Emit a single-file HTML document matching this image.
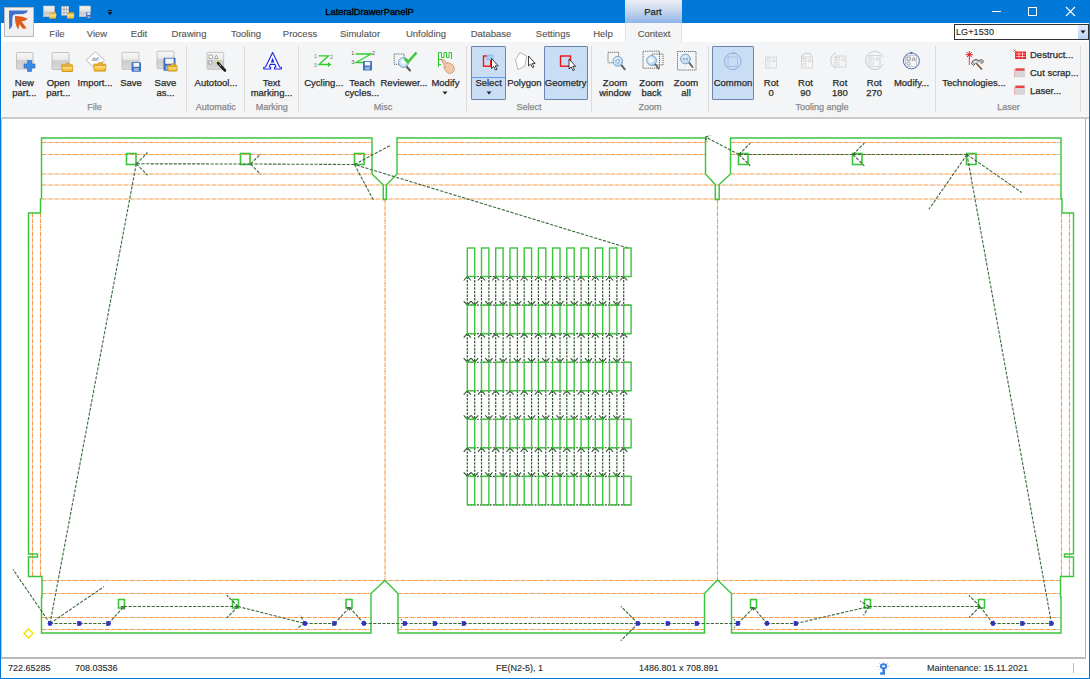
<!DOCTYPE html>
<html><head><meta charset="utf-8">
<style>
*{box-sizing:border-box}
html,body{margin:0;padding:0;width:1090px;height:679px;overflow:hidden;background:#fff;font-family:"Liberation Sans",sans-serif;}
div{-webkit-text-stroke:0.25px currentColor}
.abs{position:absolute}
#title{left:0;top:0;width:1090px;height:23px;background:#0078d7}
#tabs{left:1px;top:23px;width:1088px;height:19px;background:#fff}
#ribbon{left:2px;top:42px;width:1087px;height:77px;background:#f4f5f6;border-bottom:2px solid #cacaca}
.t{position:absolute;font-size:9.5px;color:#2b2b2b;white-space:nowrap;line-height:10.8px;text-align:center;transform:translateX(-50%)}
.g{position:absolute;font-size:9px;color:#8a8a8a;white-space:nowrap;line-height:11px;transform:translateX(-50%);top:101.6px}
.m{position:absolute;font-size:9.5px;color:#555;top:28px;white-space:nowrap;transform:translateX(-50%);-webkit-text-stroke:0.12px #555}
.sep{position:absolute;width:1px;background:#dcdcdc;top:46px;height:66px}
.st{position:absolute;font-size:9px;color:#2a2a2a;top:662.5px;white-space:nowrap;-webkit-text-stroke:0.12px #2a2a2a}
</style></head><body>
<div id="title" class="abs"></div>
<div class="abs" style="left:0;top:23px;width:1px;height:656px;background:#0078d7"></div>
<div class="abs" style="left:1089px;top:23px;width:1px;height:656px;background:#0078d7"></div>
<div class="abs" style="left:0;top:677.5px;width:1090px;height:1.5px;background:#0078d7"></div>
<div id="tabs" class="abs"></div>
<div id="ribbon" class="abs"></div>
<!-- Part tab -->
<div class="abs" style="left:625px;top:0;width:57px;height:23px;background:linear-gradient(#eceef2,#c9d8ee 45%,#8fb5e8)"></div>
<div class="abs" style="left:625px;top:23px;width:57px;height:20px;background:#f4f5f6;border-left:1px solid #e2e2e2;border-right:1px solid #e2e2e2"></div>
<div class="abs" style="left:653px;top:6px;font-size:9.5px;color:#1e1e1e;transform:translateX(-50%)">Part</div>
<div class="abs" style="left:369.5px;top:6.5px;font-size:9.3px;color:#000;transform:translateX(-50%);-webkit-text-stroke:0.35px #000">LateralDrawerPanelP</div>
<!-- app icon -->
<div class="abs" style="left:4px;top:7px;width:30px;height:30px;background:#f0f0f0;border:1px solid #b9b9b9"></div>
<svg class="abs" style="left:4px;top:7px" width="30" height="30" viewBox="0 0 30 30">
<path d="M5,3.6 L24,3.6 Q23,6.6 19,7 L11,7.3 Q8.6,7.8 8.4,10.5 L8.2,18.5 Q7.5,21 5.2,22.6 Z" fill="#3d72c8"/>
<path d="M11,9 Q18.5,8.6 23.8,11.8 Q22,14.2 17.6,14.4 L22.4,21 Q20.6,22.4 18.4,21.2 L15.4,17.2 Q15,20.2 14,22.5 Q10.5,16 11,9 Z" fill="#e05a1c"/>
</svg>
<!-- quick access icons -->
<svg class="abs" style="left:40px;top:3px" width="80" height="18" viewBox="0 0 80 18">
<defs><linearGradient id="gb" x1="0" y1="0" x2="0" y2="1"><stop offset="0" stop-color="#f6f6f6"/><stop offset="0.45" stop-color="#e4e4e4"/><stop offset="0.6" stop-color="#c9c9c9"/><stop offset="1" stop-color="#dadada"/></linearGradient>
<linearGradient id="yf" x1="0" y1="0" x2="0" y2="1"><stop offset="0" stop-color="#ffe68a"/><stop offset="1" stop-color="#f2b52c"/></linearGradient></defs>
<rect x="3.5" y="3" width="11" height="10.7" fill="url(#gb)" stroke="#c4c4c4" stroke-width="0.6"/>
<path d="M9.2,10 h2.4 l0.8,-0.7 h3.6 v6 h-6.8z" fill="#e5ad2a"/><path d="M9.6,11.2 h7 l-0.9,4.3 h-6.3z" fill="url(#yf)"/>
<rect x="21.5" y="3" width="7.5" height="9.5" fill="#d8d8d8"/>
<g fill="#f2f2f2" stroke="#9a9a9a" stroke-width="0.4"><rect x="21.8" y="3.4" width="2" height="2.6"/><rect x="24.3" y="3.4" width="2" height="2.6"/><rect x="26.8" y="3.4" width="2" height="2.6"/><rect x="21.8" y="6.6" width="2" height="2.6"/><rect x="24.3" y="6.6" width="2" height="2.6"/><rect x="26.8" y="6.6" width="2" height="2.6"/><rect x="21.8" y="9.8" width="2" height="2.4"/><rect x="24.3" y="9.8" width="2" height="2.4"/></g>
<path d="M27,10 h2.4 l0.8,-0.7 h3.6 v6 h-6.8z" fill="#e5ad2a"/><path d="M27.4,11.2 h7 l-0.9,4.3 h-6.3z" fill="url(#yf)"/>
<rect x="39.5" y="3" width="11" height="10.7" fill="url(#gb)" stroke="#c4c4c4" stroke-width="0.6"/>
<rect x="46.2" y="9.3" width="5.2" height="6.2" fill="#3d6cc0"/><rect x="47.3" y="9.6" width="3" height="2.2" fill="#eef2fa"/><rect x="47.5" y="13.3" width="2.6" height="1.8" fill="#9ab3dc"/>
<rect x="68" y="7" width="4" height="1" fill="#111"/><path d="M67.6,9 h4.8 l-2.4,3.2z" fill="#111"/>
</svg>
<!-- window controls -->
<div class="abs" style="left:992px;top:11px;width:9px;height:1px;background:#fff"></div>
<div class="abs" style="left:1028px;top:7px;width:9px;height:9px;border:1px solid #fff"></div>
<svg class="abs" style="left:1065px;top:6px" width="11" height="11" viewBox="0 0 11 11"><path d="M1,1 L10,10 M10,1 L1,10" stroke="#fff" stroke-width="1.1"/></svg>
<!-- menu tabs -->
<div class="m" style="left:57px">File</div>
<div class="m" style="left:97px">View</div>
<div class="m" style="left:139px">Edit</div>
<div class="m" style="left:189px">Drawing</div>
<div class="m" style="left:246px">Tooling</div>
<div class="m" style="left:300px">Process</div>
<div class="m" style="left:360px">Simulator</div>
<div class="m" style="left:426px">Unfolding</div>
<div class="m" style="left:491px">Database</div>
<div class="m" style="left:553px">Settings</div>
<div class="m" style="left:603px">Help</div>
<div class="m" style="left:654px">Context</div>
<!-- combo -->
<div class="abs" style="left:954px;top:24px;width:135px;height:16px;background:#fff;border:1px solid #333"></div>
<div class="abs" style="left:956px;top:26.5px;font-size:9px;color:#222;-webkit-text-stroke:0.1px #222;letter-spacing:0.1px">LG+1530</div>
<div class="abs" style="left:1078px;top:25px;width:10px;height:14px;background:linear-gradient(#e3eefa,#b8d2f0)"></div>
<svg class="abs" style="left:1080px;top:30px" width="7" height="5"><path d="M0.5,0.5 h5 l-2.5,3z" fill="#111"/></svg>

<div class="abs" style="left:471px;top:46px;width:35px;height:54px;background:#c9def5;border:1px solid #6a86aa;border-radius:1px"></div><div class="abs" style="left:472px;top:77px;width:33px;height:1px;background:#5b9de6"></div><div class="abs" style="left:544px;top:46px;width:44px;height:54px;background:#c9def5;border:1px solid #6a86aa;border-radius:1px"></div><div class="abs" style="left:712px;top:46px;width:42px;height:54px;background:#c9def5;border:1px solid #6a86aa;border-radius:1px"></div><div class="sep" style="left:186px"></div><div class="sep" style="left:243.5px"></div><div class="sep" style="left:297.5px"></div><div class="sep" style="left:466px"></div><div class="sep" style="left:591px"></div><div class="sep" style="left:707.5px"></div><div class="sep" style="left:935px"></div><div class="sep" style="left:1079.5px"></div><div class="t" style="left:24.3px;top:77.5px;">New<br>part...</div><div class="t" style="left:58.3px;top:77.5px;">Open<br>part...</div><div class="t" style="left:95px;top:77.5px;">Import...</div><div class="t" style="left:131px;top:77.5px;">Save</div><div class="t" style="left:165.4px;top:77.5px;">Save<br>as...</div><div class="g" style="left:94.5px">File</div><div class="t" style="left:216px;top:77.5px;">Autotool...</div><div class="g" style="left:215.7px">Automatic</div><div class="t" style="left:271.5px;top:77.5px;">Text<br>marking...</div><div class="g" style="left:271.8px">Marking</div><div class="t" style="left:323.8px;top:77.5px;">Cycling...</div><div class="t" style="left:362px;top:77.5px;">Teach<br>cycles...</div><div class="t" style="left:404px;top:77.5px;">Reviewer...</div><div class="t" style="left:445.4px;top:77.5px;">Modify</div><div class="g" style="left:383px">Misc</div><div class="t" style="left:488.6px;top:77.5px;">Select</div><div class="t" style="left:524.4px;top:77.5px;">Polygon</div><div class="t" style="left:565.7px;top:77.5px;">Geometry</div><div class="g" style="left:529px">Select</div><div class="t" style="left:615px;top:77.5px;">Zoom<br>window</div><div class="t" style="left:651.5px;top:77.5px;">Zoom<br>back</div><div class="t" style="left:686px;top:77.5px;">Zoom<br>all</div><div class="g" style="left:650px">Zoom</div><div class="t" style="left:733px;top:77.5px;">Common</div><div class="t" style="left:771.2px;top:77.5px;">Rot<br>0</div><div class="t" style="left:805.5px;top:77.5px;">Rot<br>90</div><div class="t" style="left:839.9px;top:77.5px;">Rot<br>180</div><div class="t" style="left:874.2px;top:77.5px;">Rot<br>270</div><div class="t" style="left:911.5px;top:77.5px;">Modify...</div><div class="g" style="left:822px">Tooling angle</div><div class="t" style="left:974px;top:77.5px;">Technologies...</div><div class="g" style="left:1008.5px">Laser</div><div class="abs" style="left:1030px;top:49px;font-size:9.5px;color:#2b2b2b;white-space:nowrap">Destruct...</div><div class="abs" style="left:1030px;top:67px;font-size:9.5px;color:#2b2b2b;white-space:nowrap">Cut scrap...</div><div class="abs" style="left:1030px;top:85px;font-size:9.5px;color:#2b2b2b;white-space:nowrap">Laser...</div><svg class="abs" style="left:442px;top:91px" width="7" height="4"><path d="M0.5,0.5h5l-2.5,3z" fill="#222"/></svg><svg class="abs" style="left:485.5px;top:91px" width="7" height="4"><path d="M0.5,0.5h5l-2.5,3z" fill="#222"/></svg><svg class="abs" style="left:0;top:0" width="1090" height="120" viewBox="0 0 1090 120"><defs>
<linearGradient id="gbox" x1="0" y1="0" x2="0" y2="1"><stop offset="0" stop-color="#f7f7f7"/><stop offset="0.4" stop-color="#ececec"/><stop offset="0.5" stop-color="#cdcdcd"/><stop offset="1" stop-color="#dadada"/></linearGradient>
<linearGradient id="fold" x1="0" y1="0" x2="0" y2="1"><stop offset="0" stop-color="#ffe58a"/><stop offset="1" stop-color="#f0b323"/></linearGradient>
<radialGradient id="mag" cx="0.45" cy="0.4" r="0.65"><stop offset="0" stop-color="#f2f8fd"/><stop offset="0.7" stop-color="#c4dcef"/><stop offset="1" stop-color="#9fc1de"/></radialGradient>
</defs><rect x="16.5" y="52.5" width="16.5" height="16.5" rx="1" fill="url(#gbox)" stroke="#b8b8b8" stroke-width="0.8"/><path d="M27.5,60.5 h4 v3.5 h3.5 v4 h-3.5 v3.5 h-4 v-3.5 h-3.5 v-4 h3.5z" fill="#3a8ae6" stroke="#2366c4" stroke-width="0.6"/><rect x="52" y="52.5" width="17" height="17" rx="1" fill="url(#gbox)" stroke="#b8b8b8" stroke-width="0.8"/><path d="M61.5,64.8 h3.8499999999999996 l1,-1.5 h3.3 v1.5 h2.8499999999999996 v6.699999999999999 h-10 z" fill="#e9b22f" stroke="#c98f16" stroke-width="0.6"/><path d="M62.0,66.3 h11 l-1,5.199999999999999 h-10 z" fill="url(#fold)" stroke="#c98f16" stroke-width="0.6"/><path d="M95.3,51.7 L104.6,60.2 L95.3,68.8 L86,60.2z" fill="#fff" stroke="#aaa" stroke-width="0.8"/><text x="95.3" y="61" font-size="5" text-anchor="middle" fill="#555" font-family="Liberation Sans">dxf</text><path d="M93.6,64.0 h4.199999999999999 l1,-1.5 h3.5999999999999996 v1.5 h3.1999999999999993 v7.0 h-11 z" fill="#e9b22f" stroke="#c98f16" stroke-width="0.6"/><path d="M94.1,65.5 h12 l-1,5.5 h-11 z" fill="url(#fold)" stroke="#c98f16" stroke-width="0.6"/><rect x="122" y="52.3" width="17" height="17" rx="1" fill="url(#gbox)" stroke="#b8b8b8" stroke-width="0.8"/><rect x="131.6" y="62.2" width="9.4" height="9.5" rx="0.8" fill="#3d6fc4"/><rect x="133.4" y="63.0" width="5.800000000000001" height="3.8000000000000003" fill="#f4f4f4"/><rect x="133.79999999999998" y="68.09" width="5.0" height="2.85" fill="#9db6de"/><rect x="157" y="51.2" width="17" height="17.5" rx="1" fill="url(#gbox)" stroke="#b8b8b8" stroke-width="0.8"/><rect x="163.5" y="57.8" width="12" height="13" rx="0.8" fill="#3d6fc4"/><rect x="165.3" y="58.599999999999994" width="8.4" height="5.2" fill="#f4f4f4"/><rect x="165.7" y="65.86" width="7.6" height="3.9" fill="#9db6de"/><path d="M167.4,65.3 h3.3249999999999997 l1,-1.5 h2.85 v1.5 h2.3249999999999997 v5.7 h-8.5 z" fill="#e9b22f" stroke="#c98f16" stroke-width="0.6"/><path d="M167.9,66.8 h9.5 l-1,4.2 h-8.5 z" fill="url(#fold)" stroke="#c98f16" stroke-width="0.6"/><rect x="207" y="52.3" width="16.7" height="17" rx="1" fill="url(#gbox)" stroke="#b8b8b8" stroke-width="0.8"/><rect x="209" y="55" width="3.5" height="3.5" fill="#fff" stroke="#777" stroke-width="0.6"/><path d="M214.5,58.5 l1.8,-3.5 l1.8,3.5z" fill="#fff" stroke="#777" stroke-width="0.6"/><rect x="209" y="61" width="3" height="3" fill="#fff" stroke="#777" stroke-width="0.6"/><path d="M218,63 L225,70.5" stroke="#222" stroke-width="2.6" stroke-linecap="round"/><path d="M219.5,64.5 L221,66" stroke="#eee" stroke-width="0.8"/><path d="M215,63 l2,0 M218,59.5 l0,2 M221,60.5 l-1.2,1.2 M214.8,66 l1.5,-1" stroke="#e8e23a" stroke-width="0.8"/><path d="M272.6,52.6 L279.6,67 L281.4,67.2 L281.4,69 L274.6,69 L274.6,67.2 L276,67 L275,64.4 L270.2,64.4 L269.2,67 L270.6,67.2 L270.6,69 L263.8,69 L263.8,67.2 L265.6,67 Z" fill="#fff" stroke="#1f28e6" stroke-width="1.15" stroke-linejoin="round"/><path d="M272.6,57.6 L274.4,62.4 L270.8,62.4 Z" fill="#1f28e6"/><text x="315.4" y="58" font-size="5" fill="#777" text-anchor="middle" font-family="Liberation Sans">1</text><text x="331.6" y="58.5" font-size="5" fill="#777" text-anchor="middle" font-family="Liberation Sans">2</text><text x="315.4" y="67" font-size="5" fill="#777" text-anchor="middle" font-family="Liberation Sans">3</text><path d="M318.5,55.8 H328.5 L319,64.5 H329" fill="none" stroke="#2ccf2c" stroke-width="1.3"/><path d="M328,62 l3.5,2.5 l-3.5,2.5z" fill="#2ccf2c"/><text x="352.7" y="55" font-size="5.5" fill="#555" text-anchor="middle" font-family="Liberation Sans">1</text><text x="373.5" y="55" font-size="5.5" fill="#555" text-anchor="middle" font-family="Liberation Sans">2</text><text x="352.7" y="64" font-size="5.5" fill="#555" text-anchor="middle" font-family="Liberation Sans">3</text><path d="M355.5,54 H371 L356,62.5 H368" fill="none" stroke="#2ccf2c" stroke-width="1.3"/><rect x="363" y="61" width="9" height="9.5" rx="0.8" fill="#3d6fc4"/><rect x="364.8" y="61.8" width="5.4" height="3.8000000000000003" fill="#f4f4f4"/><rect x="365.2" y="66.89" width="4.6" height="2.85" fill="#9db6de"/><rect x="394.2" y="54" width="10" height="10.3" fill="none" stroke="#333" stroke-width="0.7" stroke-dasharray="1.3,0.8"/><path d="M405.5,65.5 L410,70.5" stroke="#555" stroke-width="2" stroke-linecap="round"/><circle cx="403.5" cy="62.5" r="5" fill="url(#mag)" stroke="#6f9bc4" stroke-width="0.8"/><path d="M401,62.5 h5 M403.5,60 v5" stroke="#fff" stroke-width="1.2"/><path d="M404.5,58.5 L408,62 L416.5,52.5" fill="none" stroke="#3ec93e" stroke-width="2.6"/><path d="M438.5,67 V52.5 H441.5 V57.5 H444 V52.5 H446.5 V57.5 H449 V52.5 H451.5 V59" fill="none" stroke="#2cc82c" stroke-width="1"/><path d="M438.5,59.5 H442 M438.5,64.5 H441" stroke="#2cc82c" stroke-width="1"/><path d="M442,59.8 q1.2,-0.8 2,0.2 l3,4 l0.3,-1.5 q1,-0.6 1.8,0.3 l0.4,1 q1,-0.6 1.8,0.4 q1.2,-0.3 1.7,0.8 l1.5,3.5 q0.3,2.5 -1.5,3.8 l-3,1.2 q-2.5,0.2 -3.8,-1.8 l-2.2,-3.8 q-0.5,-1 0.4,-1.3 l1,0.6 l-3.4,-6z" fill="#f2c9a8" stroke="#a87858" stroke-width="0.55"/><rect x="483.5" y="56" width="7.2" height="10.2" fill="none" stroke="#f01414" stroke-width="1.4"/><rect x="487" y="55" width="6" height="5" fill="#a8ccf0" stroke="#79a9e0" stroke-width="0.6"/><path d="M491.5,58.5 v10 l2.2,-2 l1.8,3.6 l1.5,-0.7 l-1.8,-3.5 h3z" fill="#fff" stroke="#111" stroke-width="0.8" stroke-linejoin="round"/><path d="M520,52.5 L526.5,56 L525,66 L518,69.5 L515.5,60z" fill="#fff" stroke="#999" stroke-width="0.7"/><path d="M528.5,56 v10 l2.2,-2 l1.8,3.6 l1.5,-0.7 l-1.8,-3.5 h3z" fill="#fff" stroke="#111" stroke-width="0.8" stroke-linejoin="round"/><rect x="560.5" y="56" width="10" height="10.2" fill="none" stroke="#f01414" stroke-width="1.4"/><path d="M569,59 v10 l2.2,-2 l1.8,3.6 l1.5,-0.7 l-1.8,-3.5 h3z" fill="#fff" stroke="#111" stroke-width="0.8" stroke-linejoin="round"/><rect x="608" y="52.3" width="10.6" height="10.5" fill="none" stroke="#333" stroke-width="0.7" stroke-dasharray="1.3,0.8"/><path d="M621.3,64.8 L624.8,69.3" stroke="#666" stroke-width="2" stroke-linecap="round"/><circle cx="617.8" cy="61.3" r="4.9" fill="url(#mag)" stroke="#6f9cc8" stroke-width="0.9"/><path d="M615.5,61.3 h4.6 M617.8,59.0 v4.6" stroke="#5b8fc4" stroke-width="1.9"/><path d="M615.8,61.3 h4 M617.8,59.3 v4" stroke="#fff" stroke-width="0.9"/><rect x="643" y="51.2" width="16.5" height="17" fill="none" stroke="#333" stroke-width="0.7" stroke-dasharray="1.3,0.8"/><rect x="652" y="54" width="11" height="11" fill="none" stroke="#333" stroke-width="0.7" stroke-dasharray="1.3,0.8"/><path d="M655.1,64.0 L658.6,68.5" stroke="#666" stroke-width="2" stroke-linecap="round"/><circle cx="651.6" cy="60.5" r="4.9" fill="url(#mag)" stroke="#6f9cc8" stroke-width="0.9"/><path d="M649.1,60.5 h5 M651.1,58.5 l-2,2 l2,2" stroke="#fff" stroke-width="1.1" fill="none"/><rect x="677.5" y="51.5" width="18.5" height="18.5" fill="none" stroke="#333" stroke-width="0.7" stroke-dasharray="1.3,0.8"/><path d="M689.0,62.5 L692.5,67" stroke="#666" stroke-width="2" stroke-linecap="round"/><circle cx="685.5" cy="59" r="4.9" fill="url(#mag)" stroke="#6f9cc8" stroke-width="0.9"/><path d="M683.0,59 h5" stroke="#5b8fc4" stroke-width="2.2"/><path d="M683.4,59 h4.2" stroke="#fff" stroke-width="1"/><g opacity="0.45"><circle cx="732.8" cy="61.3" r="8.3" fill="none" stroke="#3b6fc2" stroke-width="1"/><rect x="728" y="57" width="9.5" height="9.5" fill="none" stroke="#3b6fc2" stroke-width="0.6"/><path d="M733,52 l2,1.3 l-2,1.3" fill="#3b6fc2"/></g><g opacity="0.35"><rect x="765.5" y="57" width="11" height="11" fill="none" stroke="#8a8a8a" stroke-width="0.7"/><rect x="767" y="58.5" width="3" height="3" fill="none" stroke="#8a8a8a" stroke-width="0.6"/><circle cx="768.5" cy="64.8" r="1.5" fill="none" stroke="#8a8a8a" stroke-width="0.6"/><path d="M772,61.5 l1.8,-3 l1.8,3z" fill="none" stroke="#8a8a8a" stroke-width="0.6"/></g><g opacity="0.4"><rect x="801.5" y="57" width="11" height="11" fill="none" stroke="#8a8a8a" stroke-width="0.7"/><rect x="803" y="58.5" width="3" height="3" fill="none" stroke="#8a8a8a" stroke-width="0.6"/><circle cx="804.5" cy="64.8" r="1.5" fill="none" stroke="#8a8a8a" stroke-width="0.6"/><path d="M808,61.5 l1.8,-3 l1.8,3z" fill="none" stroke="#8a8a8a" stroke-width="0.6"/><path d="M812,55 a7,7 0 0 0 -11,2" fill="none" stroke="#4a73b5" stroke-width="0.8"/></g><g opacity="0.4"><rect x="835.0" y="56" width="11" height="11" fill="none" stroke="#8a8a8a" stroke-width="0.7"/><rect x="836.5" y="57.5" width="3" height="3" fill="none" stroke="#8a8a8a" stroke-width="0.6"/><circle cx="838.0" cy="63.8" r="1.5" fill="none" stroke="#8a8a8a" stroke-width="0.6"/><path d="M841.5,60.5 l1.8,-3 l1.8,3z" fill="none" stroke="#8a8a8a" stroke-width="0.6"/><path d="M836,53 a8,8 0 0 0 0,15" fill="none" stroke="#4a73b5" stroke-width="0.8"/></g><g opacity="0.4"><rect x="869.0" y="55.5" width="11" height="11" fill="none" stroke="#8a8a8a" stroke-width="0.7"/><rect x="870.5" y="57.0" width="3" height="3" fill="none" stroke="#8a8a8a" stroke-width="0.6"/><circle cx="872.0" cy="63.3" r="1.5" fill="none" stroke="#8a8a8a" stroke-width="0.6"/><path d="M875.5,60.0 l1.8,-3 l1.8,3z" fill="none" stroke="#8a8a8a" stroke-width="0.6"/><path d="M883,64 a9,9 0 1 1 0,-7" fill="none" stroke="#4a73b5" stroke-width="0.8"/></g><circle cx="911.4" cy="60.9" r="8" fill="#f4f6fa" stroke="#4a6fb2" stroke-width="1"/><rect x="905.5" y="55.5" width="11" height="11" fill="none" stroke="#999" stroke-width="0.5"/><rect x="907" y="57" width="3.2" height="3.2" fill="none" stroke="#666" stroke-width="0.6"/><circle cx="908.6" cy="63.6" r="1.6" fill="none" stroke="#666" stroke-width="0.6"/><path d="M912,60.2 l1.8,-3 l1.8,3z" fill="none" stroke="#666" stroke-width="0.6"/><path d="M910.5,51.5 l2.5,1.4 l-2.5,1.4z" fill="#3f64a8"/><path d="M969.3,51 v7.5 M965.8,54.7 h7 M966.8,52.2 l5,5 M971.8,52.2 l-5,5" stroke="#f01818" stroke-width="1"/><path d="M969.3,58 v7" stroke="#f01818" stroke-width="0.8"/><path d="M973,60.5 q3,-2 6,0 l3,-1 q2,1 1,3 l-2,1 M973,60.5 l-1.5,3 l2,2 l2,-2" fill="#bbb" stroke="#666" stroke-width="1"/><path d="M976,63 L982,69.5" stroke="#8a5a3a" stroke-width="1.8"/><rect x="1015" y="51.5" width="11" height="7.5" fill="#f01e1e"/><path d="M1015.5,54 h10 M1015.5,56.5 h10 M1019,52 v6.5 M1022.5,52 v6.5" stroke="#fff" stroke-width="0.6"/><path d="M1013.5,49.5 l2,2 M1015.5,49.5 l-2,2" stroke="#f01e1e" stroke-width="0.7"/><rect x="1015" y="51.5" width="1" height="7.5" fill="#e34"/><rect x="1015.5" y="68.4" width="9" height="8.5" fill="#d6d6d6" stroke="#c4c4c4" stroke-width="0.5"/><rect x="1015.5" y="68.4" width="9" height="2.3" fill="#ef4444"/><rect x="1014" y="69.4" width="0.8" height="8" fill="#f0a0a0"/><rect x="1015.5" y="85.7" width="9" height="8.5" fill="#d6d6d6" stroke="#c4c4c4" stroke-width="0.5"/><rect x="1015.5" y="85.7" width="9" height="2.3" fill="#ef4444"/><rect x="1014" y="86.7" width="0.8" height="8" fill="#f0a0a0"/></svg>

<!-- drawing area borders -->
<div class="abs" style="left:1px;top:118px;width:1px;height:540px;background:#c4c4c4"></div>
<div class="abs" style="left:1px;top:657px;width:1085px;height:1.5px;background:#bababa"></div>
<div class="abs" style="left:1085px;top:118px;width:1px;height:540px;background:#b4b4b4"></div>
<svg class="abs" style="left:0;top:0" width="1090" height="679" viewBox="0 0 1090 679"><line x1="42" y1="142.5" x2="371" y2="142.5" stroke="#f59a48" stroke-width="1.15" stroke-dasharray="4,0.7,0.9,0.7"/><line x1="397" y1="142.5" x2="705" y2="142.5" stroke="#f59a48" stroke-width="1.15" stroke-dasharray="4,0.7,0.9,0.7"/><line x1="731" y1="142.5" x2="1060" y2="142.5" stroke="#f59a48" stroke-width="1.15" stroke-dasharray="4,0.7,0.9,0.7"/><line x1="42" y1="154.5" x2="371" y2="154.5" stroke="#f59a48" stroke-width="1.15" stroke-dasharray="4,0.7,0.9,0.7"/><line x1="397" y1="154.5" x2="705" y2="154.5" stroke="#f59a48" stroke-width="1.15" stroke-dasharray="4,0.7,0.9,0.7"/><line x1="731" y1="154.5" x2="1060" y2="154.5" stroke="#f59a48" stroke-width="1.15" stroke-dasharray="4,0.7,0.9,0.7"/><line x1="42" y1="174" x2="371" y2="174" stroke="#f59a48" stroke-width="1.15" stroke-dasharray="4,0.7,0.9,0.7"/><line x1="397" y1="174" x2="705" y2="174" stroke="#f59a48" stroke-width="1.15" stroke-dasharray="4,0.7,0.9,0.7"/><line x1="731" y1="174" x2="1060" y2="174" stroke="#f59a48" stroke-width="1.15" stroke-dasharray="4,0.7,0.9,0.7"/><line x1="42" y1="185" x2="1060" y2="185" stroke="#f59a48" stroke-width="1.15" stroke-dasharray="4,0.7,0.9,0.7"/><line x1="42" y1="199" x2="1060" y2="199" stroke="#f59a48" stroke-width="1.15" stroke-dasharray="4,0.7,0.9,0.7"/><line x1="32.5" y1="213" x2="32.5" y2="576" stroke="#f59a48" stroke-width="1.1" stroke-dasharray="4,0.7,0.9,0.7"/><line x1="40.5" y1="213" x2="40.5" y2="576" stroke="#f59a48" stroke-width="1.1" stroke-dasharray="4,0.7,0.9,0.7"/><line x1="1061.5" y1="213" x2="1061.5" y2="576" stroke="#f59a48" stroke-width="1.1" stroke-dasharray="4,0.7,0.9,0.7"/><line x1="1069.5" y1="213" x2="1069.5" y2="576" stroke="#f59a48" stroke-width="1.1" stroke-dasharray="4,0.7,0.9,0.7"/><line x1="385" y1="199.5" x2="385" y2="580" stroke="#f59a48" stroke-width="1.1" stroke-dasharray="4,0.7,0.9,0.7"/><line x1="717.5" y1="199.5" x2="717.5" y2="580" stroke="#f59a48" stroke-width="1.1" stroke-dasharray="4,0.7,0.9,0.7"/><line x1="42" y1="580.5" x2="1060" y2="580.5" stroke="#f59a48" stroke-width="1.15" stroke-dasharray="4,0.7,0.9,0.7"/><line x1="42" y1="593.5" x2="371" y2="593.5" stroke="#f59a48" stroke-width="1.15" stroke-dasharray="4,0.7,0.9,0.7"/><line x1="398" y1="593.5" x2="704" y2="593.5" stroke="#f59a48" stroke-width="1.15" stroke-dasharray="4,0.7,0.9,0.7"/><line x1="731" y1="593.5" x2="1060" y2="593.5" stroke="#f59a48" stroke-width="1.15" stroke-dasharray="4,0.7,0.9,0.7"/><line x1="42" y1="617.5" x2="371" y2="617.5" stroke="#f59a48" stroke-width="1.15" stroke-dasharray="4,0.7,0.9,0.7"/><line x1="398" y1="617.5" x2="704" y2="617.5" stroke="#f59a48" stroke-width="1.15" stroke-dasharray="4,0.7,0.9,0.7"/><line x1="731" y1="617.5" x2="1060" y2="617.5" stroke="#f59a48" stroke-width="1.15" stroke-dasharray="4,0.7,0.9,0.7"/><line x1="42" y1="629.5" x2="371" y2="629.5" stroke="#f59a48" stroke-width="1.15" stroke-dasharray="4,0.7,0.9,0.7"/><line x1="398" y1="629.5" x2="704" y2="629.5" stroke="#f59a48" stroke-width="1.15" stroke-dasharray="4,0.7,0.9,0.7"/><line x1="731" y1="629.5" x2="1060" y2="629.5" stroke="#f59a48" stroke-width="1.15" stroke-dasharray="4,0.7,0.9,0.7"/><polyline points="41.5,199 41.5,138 372,138 372,174 383.3,185 383.3,199.5 386.3,199.5 386.3,185 397,174 397,138 705.5,138 705.5,174 715.3,184.5 715.3,199.5 719.2,199.5 719.2,184.5 730.5,174 730.5,138 1061,138 1061,199 1062,199 1062,213 1073.5,213 1073.5,554 1064.5,554 1064.5,557 1073.5,557 1073.5,576.5 1060.5,576.5 1060.5,597 1061,597 1061,633 731.5,633 731.5,593.5 717.5,580 704.5,593.5 704.5,633 398,633 398,593.5 385,580.5 371,593.5 371,633 41.5,633 41.5,597 42,597 42,576.5 28.5,576.5 28.5,557 37.5,557 37.5,554 28.5,554 28.5,213 40.5,213 40.5,199 41.5,199" fill="none" stroke="#3cc43c" stroke-width="1.45" stroke-linejoin="miter"/><rect x="126.5" y="153.5" width="9.5" height="11.0" fill="none" stroke="#3cc43c" stroke-width="1.6"/><rect x="240.5" y="153.5" width="9.5" height="11.0" fill="none" stroke="#3cc43c" stroke-width="1.6"/><rect x="354.5" y="153.5" width="9.5" height="11.0" fill="none" stroke="#3cc43c" stroke-width="1.6"/><rect x="738.5" y="153.5" width="9.5" height="11.0" fill="none" stroke="#3cc43c" stroke-width="1.6"/><rect x="852.5" y="153.5" width="9.5" height="11.0" fill="none" stroke="#3cc43c" stroke-width="1.6"/><rect x="966.5" y="153.5" width="9.5" height="11.0" fill="none" stroke="#3cc43c" stroke-width="1.6"/><rect x="118.5" y="599.5" width="6.0" height="8.5" fill="none" stroke="#3cc43c" stroke-width="1.6"/><rect x="232.5" y="599.5" width="6.0" height="8.5" fill="none" stroke="#3cc43c" stroke-width="1.6"/><rect x="346" y="599.5" width="6" height="8.5" fill="none" stroke="#3cc43c" stroke-width="1.6"/><rect x="750.5" y="599.5" width="6.0" height="8.5" fill="none" stroke="#3cc43c" stroke-width="1.6"/><rect x="864.5" y="599.5" width="6.0" height="8.5" fill="none" stroke="#3cc43c" stroke-width="1.6"/><rect x="978.5" y="599.5" width="6.0" height="8.5" fill="none" stroke="#3cc43c" stroke-width="1.6"/><line x1="628" y1="248" x2="354.5" y2="164.5" stroke="#3a6a3a" stroke-width="1.1" stroke-dasharray="3.2,1.4"/><line x1="354.5" y1="164.5" x2="373.3" y2="199.8" stroke="#3a6a3a" stroke-width="1.1" stroke-dasharray="3.2,1.4"/><line x1="354.5" y1="164.5" x2="389.8" y2="145.7" stroke="#3a6a3a" stroke-width="1.1" stroke-dasharray="3.2,1.4"/><line x1="354.5" y1="164.5" x2="250.5" y2="164" stroke="#3a6a3a" stroke-width="1.1" stroke-dasharray="3.2,1.4"/><line x1="250.5" y1="164" x2="260.7" y2="174.3" stroke="#3a6a3a" stroke-width="1.1" stroke-dasharray="3.2,1.4"/><line x1="250.5" y1="164" x2="260.8" y2="153.8" stroke="#3a6a3a" stroke-width="1.1" stroke-dasharray="3.2,1.4"/><line x1="250.5" y1="164" x2="136.3" y2="163.8" stroke="#3a6a3a" stroke-width="1.1" stroke-dasharray="3.2,1.4"/><line x1="136.3" y1="163.8" x2="147.6" y2="175.1" stroke="#3a6a3a" stroke-width="1.1" stroke-dasharray="3.2,1.4"/><line x1="136.3" y1="163.8" x2="147.6" y2="152.5" stroke="#3a6a3a" stroke-width="1.1" stroke-dasharray="3.2,1.4"/><line x1="136.3" y1="163.8" x2="50" y2="623.5" stroke="#3a6a3a" stroke-width="1.1" stroke-dasharray="3.2,1.4"/><line x1="50" y1="623.5" x2="104.1" y2="586.5" stroke="#3a6a3a" stroke-width="1.1" stroke-dasharray="3.2,1.4"/><line x1="50" y1="623.5" x2="13.0" y2="569.4" stroke="#3a6a3a" stroke-width="1.1" stroke-dasharray="3.2,1.4"/><line x1="50" y1="623.5" x2="79.5" y2="623.5" stroke="#3a6a3a" stroke-width="1.1" stroke-dasharray="3.2,1.4"/><line x1="79.5" y1="623.5" x2="76.6" y2="620.6" stroke="#3a6a3a" stroke-width="1.1" stroke-dasharray="3.2,1.4"/><line x1="79.5" y1="623.5" x2="76.6" y2="626.4" stroke="#3a6a3a" stroke-width="1.1" stroke-dasharray="3.2,1.4"/><line x1="79.5" y1="623.5" x2="108.5" y2="623.5" stroke="#3a6a3a" stroke-width="1.1" stroke-dasharray="3.2,1.4"/><line x1="108.5" y1="623.5" x2="105.6" y2="620.6" stroke="#3a6a3a" stroke-width="1.1" stroke-dasharray="3.2,1.4"/><line x1="108.5" y1="623.5" x2="105.6" y2="626.4" stroke="#3a6a3a" stroke-width="1.1" stroke-dasharray="3.2,1.4"/><line x1="108.5" y1="623.5" x2="124" y2="606.5" stroke="#3a6a3a" stroke-width="1.1" stroke-dasharray="3.2,1.4"/><line x1="124" y1="606.5" x2="120.8" y2="606.6" stroke="#3a6a3a" stroke-width="1.1" stroke-dasharray="3.2,1.4"/><line x1="124" y1="606.5" x2="124.1" y2="609.7" stroke="#3a6a3a" stroke-width="1.1" stroke-dasharray="3.2,1.4"/><line x1="124" y1="606.5" x2="238" y2="606.5" stroke="#3a6a3a" stroke-width="1.1" stroke-dasharray="3.2,1.4"/><line x1="238" y1="606.5" x2="226.7" y2="595.2" stroke="#3a6a3a" stroke-width="1.1" stroke-dasharray="3.2,1.4"/><line x1="238" y1="606.5" x2="226.7" y2="617.8" stroke="#3a6a3a" stroke-width="1.1" stroke-dasharray="3.2,1.4"/><line x1="238" y1="606.5" x2="305" y2="623.5" stroke="#3a6a3a" stroke-width="1.1" stroke-dasharray="3.2,1.4"/><line x1="305" y1="623.5" x2="300.1" y2="615.2" stroke="#3a6a3a" stroke-width="1.1" stroke-dasharray="3.2,1.4"/><line x1="305" y1="623.5" x2="296.7" y2="628.4" stroke="#3a6a3a" stroke-width="1.1" stroke-dasharray="3.2,1.4"/><line x1="305" y1="623.5" x2="334.5" y2="623.5" stroke="#3a6a3a" stroke-width="1.1" stroke-dasharray="3.2,1.4"/><line x1="334.5" y1="623.5" x2="331.6" y2="620.6" stroke="#3a6a3a" stroke-width="1.1" stroke-dasharray="3.2,1.4"/><line x1="334.5" y1="623.5" x2="331.6" y2="626.4" stroke="#3a6a3a" stroke-width="1.1" stroke-dasharray="3.2,1.4"/><line x1="334.5" y1="623.5" x2="349.6" y2="607.5" stroke="#3a6a3a" stroke-width="1.1" stroke-dasharray="3.2,1.4"/><line x1="349.6" y1="607.5" x2="346.5" y2="607.6" stroke="#3a6a3a" stroke-width="1.1" stroke-dasharray="3.2,1.4"/><line x1="349.6" y1="607.5" x2="349.7" y2="610.6" stroke="#3a6a3a" stroke-width="1.1" stroke-dasharray="3.2,1.4"/><line x1="349.6" y1="607.5" x2="364" y2="623.5" stroke="#3a6a3a" stroke-width="1.1" stroke-dasharray="3.2,1.4"/><line x1="364" y1="623.5" x2="364.2" y2="620.5" stroke="#3a6a3a" stroke-width="1.1" stroke-dasharray="3.2,1.4"/><line x1="364" y1="623.5" x2="361.0" y2="623.3" stroke="#3a6a3a" stroke-width="1.1" stroke-dasharray="3.2,1.4"/><line x1="364" y1="623.5" x2="405" y2="623.5" stroke="#3a6a3a" stroke-width="1.1" stroke-dasharray="3.2,1.4"/><line x1="405" y1="623.5" x2="400.9" y2="619.4" stroke="#3a6a3a" stroke-width="1.1" stroke-dasharray="3.2,1.4"/><line x1="405" y1="623.5" x2="400.9" y2="627.6" stroke="#3a6a3a" stroke-width="1.1" stroke-dasharray="3.2,1.4"/><line x1="405" y1="623.5" x2="435" y2="623.5" stroke="#3a6a3a" stroke-width="1.1" stroke-dasharray="3.2,1.4"/><line x1="435" y1="623.5" x2="432.0" y2="620.5" stroke="#3a6a3a" stroke-width="1.1" stroke-dasharray="3.2,1.4"/><line x1="435" y1="623.5" x2="432.0" y2="626.5" stroke="#3a6a3a" stroke-width="1.1" stroke-dasharray="3.2,1.4"/><line x1="435" y1="623.5" x2="464" y2="623.5" stroke="#3a6a3a" stroke-width="1.1" stroke-dasharray="3.2,1.4"/><line x1="464" y1="623.5" x2="461.1" y2="620.6" stroke="#3a6a3a" stroke-width="1.1" stroke-dasharray="3.2,1.4"/><line x1="464" y1="623.5" x2="461.1" y2="626.4" stroke="#3a6a3a" stroke-width="1.1" stroke-dasharray="3.2,1.4"/><line x1="464" y1="623.5" x2="638" y2="623.5" stroke="#3a6a3a" stroke-width="1.1" stroke-dasharray="3.2,1.4"/><line x1="638" y1="623.5" x2="620.8" y2="606.3" stroke="#3a6a3a" stroke-width="1.1" stroke-dasharray="3.2,1.4"/><line x1="638" y1="623.5" x2="620.8" y2="640.7" stroke="#3a6a3a" stroke-width="1.1" stroke-dasharray="3.2,1.4"/><line x1="638" y1="623.5" x2="668" y2="623.5" stroke="#3a6a3a" stroke-width="1.1" stroke-dasharray="3.2,1.4"/><line x1="668" y1="623.5" x2="665.0" y2="620.5" stroke="#3a6a3a" stroke-width="1.1" stroke-dasharray="3.2,1.4"/><line x1="668" y1="623.5" x2="665.0" y2="626.5" stroke="#3a6a3a" stroke-width="1.1" stroke-dasharray="3.2,1.4"/><line x1="668" y1="623.5" x2="697" y2="623.5" stroke="#3a6a3a" stroke-width="1.1" stroke-dasharray="3.2,1.4"/><line x1="697" y1="623.5" x2="694.1" y2="620.6" stroke="#3a6a3a" stroke-width="1.1" stroke-dasharray="3.2,1.4"/><line x1="697" y1="623.5" x2="694.1" y2="626.4" stroke="#3a6a3a" stroke-width="1.1" stroke-dasharray="3.2,1.4"/><line x1="697" y1="623.5" x2="738" y2="623.5" stroke="#3a6a3a" stroke-width="1.1" stroke-dasharray="3.2,1.4"/><line x1="738" y1="623.5" x2="733.9" y2="619.4" stroke="#3a6a3a" stroke-width="1.1" stroke-dasharray="3.2,1.4"/><line x1="738" y1="623.5" x2="733.9" y2="627.6" stroke="#3a6a3a" stroke-width="1.1" stroke-dasharray="3.2,1.4"/><line x1="738" y1="623.5" x2="753.5" y2="607.5" stroke="#3a6a3a" stroke-width="1.1" stroke-dasharray="3.2,1.4"/><line x1="753.5" y1="607.5" x2="750.4" y2="607.5" stroke="#3a6a3a" stroke-width="1.1" stroke-dasharray="3.2,1.4"/><line x1="753.5" y1="607.5" x2="753.5" y2="610.6" stroke="#3a6a3a" stroke-width="1.1" stroke-dasharray="3.2,1.4"/><line x1="753.5" y1="607.5" x2="767" y2="623.5" stroke="#3a6a3a" stroke-width="1.1" stroke-dasharray="3.2,1.4"/><line x1="767" y1="623.5" x2="767.2" y2="620.6" stroke="#3a6a3a" stroke-width="1.1" stroke-dasharray="3.2,1.4"/><line x1="767" y1="623.5" x2="764.1" y2="623.3" stroke="#3a6a3a" stroke-width="1.1" stroke-dasharray="3.2,1.4"/><line x1="767" y1="623.5" x2="796" y2="623.5" stroke="#3a6a3a" stroke-width="1.1" stroke-dasharray="3.2,1.4"/><line x1="796" y1="623.5" x2="793.1" y2="620.6" stroke="#3a6a3a" stroke-width="1.1" stroke-dasharray="3.2,1.4"/><line x1="796" y1="623.5" x2="793.1" y2="626.4" stroke="#3a6a3a" stroke-width="1.1" stroke-dasharray="3.2,1.4"/><line x1="796" y1="623.5" x2="869" y2="606.5" stroke="#3a6a3a" stroke-width="1.1" stroke-dasharray="3.2,1.4"/><line x1="869" y1="606.5" x2="860.1" y2="601.0" stroke="#3a6a3a" stroke-width="1.1" stroke-dasharray="3.2,1.4"/><line x1="869" y1="606.5" x2="863.5" y2="615.4" stroke="#3a6a3a" stroke-width="1.1" stroke-dasharray="3.2,1.4"/><line x1="869" y1="606.5" x2="980" y2="606.5" stroke="#3a6a3a" stroke-width="1.1" stroke-dasharray="3.2,1.4"/><line x1="980" y1="606.5" x2="969.0" y2="595.5" stroke="#3a6a3a" stroke-width="1.1" stroke-dasharray="3.2,1.4"/><line x1="980" y1="606.5" x2="969.0" y2="617.5" stroke="#3a6a3a" stroke-width="1.1" stroke-dasharray="3.2,1.4"/><line x1="980" y1="606.5" x2="993" y2="623.5" stroke="#3a6a3a" stroke-width="1.1" stroke-dasharray="3.2,1.4"/><line x1="993" y1="623.5" x2="993.4" y2="620.5" stroke="#3a6a3a" stroke-width="1.1" stroke-dasharray="3.2,1.4"/><line x1="993" y1="623.5" x2="990.0" y2="623.1" stroke="#3a6a3a" stroke-width="1.1" stroke-dasharray="3.2,1.4"/><line x1="993" y1="623.5" x2="1022.5" y2="623.5" stroke="#3a6a3a" stroke-width="1.1" stroke-dasharray="3.2,1.4"/><line x1="1022.5" y1="623.5" x2="1019.6" y2="620.6" stroke="#3a6a3a" stroke-width="1.1" stroke-dasharray="3.2,1.4"/><line x1="1022.5" y1="623.5" x2="1019.6" y2="626.4" stroke="#3a6a3a" stroke-width="1.1" stroke-dasharray="3.2,1.4"/><line x1="1022.5" y1="623.5" x2="1051.5" y2="623.5" stroke="#3a6a3a" stroke-width="1.1" stroke-dasharray="3.2,1.4"/><line x1="1051.5" y1="623.5" x2="1048.6" y2="620.6" stroke="#3a6a3a" stroke-width="1.1" stroke-dasharray="3.2,1.4"/><line x1="1051.5" y1="623.5" x2="1048.6" y2="626.4" stroke="#3a6a3a" stroke-width="1.1" stroke-dasharray="3.2,1.4"/><line x1="1051.5" y1="623.5" x2="967" y2="154.5" stroke="#3a6a3a" stroke-width="1.1" stroke-dasharray="3.2,1.4"/><line x1="967" y1="154.5" x2="928.9" y2="209.3" stroke="#3a6a3a" stroke-width="1.1" stroke-dasharray="3.2,1.4"/><line x1="967" y1="154.5" x2="1021.8" y2="192.6" stroke="#3a6a3a" stroke-width="1.1" stroke-dasharray="3.2,1.4"/><line x1="967" y1="154.5" x2="853" y2="154.5" stroke="#3a6a3a" stroke-width="1.1" stroke-dasharray="3.2,1.4"/><line x1="853" y1="154.5" x2="864.3" y2="165.8" stroke="#3a6a3a" stroke-width="1.1" stroke-dasharray="3.2,1.4"/><line x1="853" y1="154.5" x2="864.3" y2="143.2" stroke="#3a6a3a" stroke-width="1.1" stroke-dasharray="3.2,1.4"/><line x1="853" y1="154.5" x2="739" y2="154.5" stroke="#3a6a3a" stroke-width="1.1" stroke-dasharray="3.2,1.4"/><line x1="739" y1="154.5" x2="750.3" y2="165.8" stroke="#3a6a3a" stroke-width="1.1" stroke-dasharray="3.2,1.4"/><line x1="739" y1="154.5" x2="750.3" y2="143.2" stroke="#3a6a3a" stroke-width="1.1" stroke-dasharray="3.2,1.4"/><line x1="739" y1="154.5" x2="705.5" y2="137" stroke="#3a6a3a" stroke-width="1.1" stroke-dasharray="3.2,1.4"/><line x1="705.5" y1="137" x2="707.1" y2="142.0" stroke="#3a6a3a" stroke-width="1.1" stroke-dasharray="3.2,1.4"/><line x1="705.5" y1="137" x2="710.5" y2="135.4" stroke="#3a6a3a" stroke-width="1.1" stroke-dasharray="3.2,1.4"/><line x1="467.3" y1="276.5" x2="467.3" y2="305.1" stroke="#2b552b" stroke-width="1.2" stroke-dasharray="2.4,1.2"/><polyline points="463.7,280.5 467.3,276.5 470.9,280.5" fill="none" stroke="#2b552b" stroke-width="1.1"/><polyline points="463.7,301.1 467.3,305.1 470.9,301.1" fill="none" stroke="#2b552b" stroke-width="1.1"/><line x1="474.7" y1="276.5" x2="474.7" y2="305.1" stroke="#2b552b" stroke-width="1.2" stroke-dasharray="2.4,1.2"/><polyline points="471.1,301.1 474.7,305.1 478.3,301.1" fill="none" stroke="#2b552b" stroke-width="1.1"/><line x1="481.5" y1="276.5" x2="481.5" y2="305.1" stroke="#2b552b" stroke-width="1.2" stroke-dasharray="2.4,1.2"/><polyline points="477.9,280.5 481.5,276.5 485.1,280.5" fill="none" stroke="#2b552b" stroke-width="1.1"/><line x1="488.9" y1="276.5" x2="488.9" y2="305.1" stroke="#2b552b" stroke-width="1.2" stroke-dasharray="2.4,1.2"/><polyline points="485.3,301.1 488.9,305.1 492.5,301.1" fill="none" stroke="#2b552b" stroke-width="1.1"/><line x1="495.7" y1="276.5" x2="495.7" y2="305.1" stroke="#2b552b" stroke-width="1.2" stroke-dasharray="2.4,1.2"/><polyline points="492.1,280.5 495.7,276.5 499.3,280.5" fill="none" stroke="#2b552b" stroke-width="1.1"/><line x1="503.1" y1="276.5" x2="503.1" y2="305.1" stroke="#2b552b" stroke-width="1.2" stroke-dasharray="2.4,1.2"/><polyline points="499.5,301.1 503.1,305.1 506.7,301.1" fill="none" stroke="#2b552b" stroke-width="1.1"/><line x1="510.0" y1="276.5" x2="510.0" y2="305.1" stroke="#2b552b" stroke-width="1.2" stroke-dasharray="2.4,1.2"/><polyline points="506.4,280.5 510.0,276.5 513.6,280.5" fill="none" stroke="#2b552b" stroke-width="1.1"/><line x1="517.4" y1="276.5" x2="517.4" y2="305.1" stroke="#2b552b" stroke-width="1.2" stroke-dasharray="2.4,1.2"/><polyline points="513.8,301.1 517.4,305.1 521.0,301.1" fill="none" stroke="#2b552b" stroke-width="1.1"/><line x1="524.2" y1="276.5" x2="524.2" y2="305.1" stroke="#2b552b" stroke-width="1.2" stroke-dasharray="2.4,1.2"/><polyline points="520.6,280.5 524.2,276.5 527.8,280.5" fill="none" stroke="#2b552b" stroke-width="1.1"/><line x1="531.6" y1="276.5" x2="531.6" y2="305.1" stroke="#2b552b" stroke-width="1.2" stroke-dasharray="2.4,1.2"/><polyline points="528.0,301.1 531.6,305.1 535.2,301.1" fill="none" stroke="#2b552b" stroke-width="1.1"/><line x1="538.4" y1="276.5" x2="538.4" y2="305.1" stroke="#2b552b" stroke-width="1.2" stroke-dasharray="2.4,1.2"/><polyline points="534.8,280.5 538.4,276.5 542.0,280.5" fill="none" stroke="#2b552b" stroke-width="1.1"/><line x1="545.8" y1="276.5" x2="545.8" y2="305.1" stroke="#2b552b" stroke-width="1.2" stroke-dasharray="2.4,1.2"/><polyline points="542.2,301.1 545.8,305.1 549.4,301.1" fill="none" stroke="#2b552b" stroke-width="1.1"/><line x1="552.6" y1="276.5" x2="552.6" y2="305.1" stroke="#2b552b" stroke-width="1.2" stroke-dasharray="2.4,1.2"/><polyline points="549.0,280.5 552.6,276.5 556.2,280.5" fill="none" stroke="#2b552b" stroke-width="1.1"/><line x1="560.0" y1="276.5" x2="560.0" y2="305.1" stroke="#2b552b" stroke-width="1.2" stroke-dasharray="2.4,1.2"/><polyline points="556.4,301.1 560.0,305.1 563.6,301.1" fill="none" stroke="#2b552b" stroke-width="1.1"/><line x1="566.8" y1="276.5" x2="566.8" y2="305.1" stroke="#2b552b" stroke-width="1.2" stroke-dasharray="2.4,1.2"/><polyline points="563.2,280.5 566.8,276.5 570.4,280.5" fill="none" stroke="#2b552b" stroke-width="1.1"/><line x1="574.2" y1="276.5" x2="574.2" y2="305.1" stroke="#2b552b" stroke-width="1.2" stroke-dasharray="2.4,1.2"/><polyline points="570.6,301.1 574.2,305.1 577.8,301.1" fill="none" stroke="#2b552b" stroke-width="1.1"/><line x1="581.1" y1="276.5" x2="581.1" y2="305.1" stroke="#2b552b" stroke-width="1.2" stroke-dasharray="2.4,1.2"/><polyline points="577.5,280.5 581.1,276.5 584.7,280.5" fill="none" stroke="#2b552b" stroke-width="1.1"/><line x1="588.5" y1="276.5" x2="588.5" y2="305.1" stroke="#2b552b" stroke-width="1.2" stroke-dasharray="2.4,1.2"/><polyline points="584.9,301.1 588.5,305.1 592.1,301.1" fill="none" stroke="#2b552b" stroke-width="1.1"/><line x1="595.3" y1="276.5" x2="595.3" y2="305.1" stroke="#2b552b" stroke-width="1.2" stroke-dasharray="2.4,1.2"/><polyline points="591.7,280.5 595.3,276.5 598.9,280.5" fill="none" stroke="#2b552b" stroke-width="1.1"/><line x1="602.7" y1="276.5" x2="602.7" y2="305.1" stroke="#2b552b" stroke-width="1.2" stroke-dasharray="2.4,1.2"/><polyline points="599.1,301.1 602.7,305.1 606.3,301.1" fill="none" stroke="#2b552b" stroke-width="1.1"/><line x1="609.5" y1="276.5" x2="609.5" y2="305.1" stroke="#2b552b" stroke-width="1.2" stroke-dasharray="2.4,1.2"/><polyline points="605.9,280.5 609.5,276.5 613.1,280.5" fill="none" stroke="#2b552b" stroke-width="1.1"/><line x1="616.9" y1="276.5" x2="616.9" y2="305.1" stroke="#2b552b" stroke-width="1.2" stroke-dasharray="2.4,1.2"/><polyline points="613.3,301.1 616.9,305.1 620.5,301.1" fill="none" stroke="#2b552b" stroke-width="1.1"/><line x1="623.7" y1="276.5" x2="623.7" y2="305.1" stroke="#2b552b" stroke-width="1.2" stroke-dasharray="2.4,1.2"/><polyline points="620.1,280.5 623.7,276.5 627.3,280.5" fill="none" stroke="#2b552b" stroke-width="1.1"/><line x1="467.3" y1="333.6" x2="467.3" y2="362.2" stroke="#2b552b" stroke-width="1.2" stroke-dasharray="2.4,1.2"/><polyline points="463.7,337.6 467.3,333.6 470.9,337.6" fill="none" stroke="#2b552b" stroke-width="1.1"/><polyline points="463.7,358.2 467.3,362.2 470.9,358.2" fill="none" stroke="#2b552b" stroke-width="1.1"/><line x1="474.7" y1="333.6" x2="474.7" y2="362.2" stroke="#2b552b" stroke-width="1.2" stroke-dasharray="2.4,1.2"/><polyline points="471.1,358.2 474.7,362.2 478.3,358.2" fill="none" stroke="#2b552b" stroke-width="1.1"/><line x1="481.5" y1="333.6" x2="481.5" y2="362.2" stroke="#2b552b" stroke-width="1.2" stroke-dasharray="2.4,1.2"/><polyline points="477.9,337.6 481.5,333.6 485.1,337.6" fill="none" stroke="#2b552b" stroke-width="1.1"/><line x1="488.9" y1="333.6" x2="488.9" y2="362.2" stroke="#2b552b" stroke-width="1.2" stroke-dasharray="2.4,1.2"/><polyline points="485.3,358.2 488.9,362.2 492.5,358.2" fill="none" stroke="#2b552b" stroke-width="1.1"/><line x1="495.7" y1="333.6" x2="495.7" y2="362.2" stroke="#2b552b" stroke-width="1.2" stroke-dasharray="2.4,1.2"/><polyline points="492.1,337.6 495.7,333.6 499.3,337.6" fill="none" stroke="#2b552b" stroke-width="1.1"/><line x1="503.1" y1="333.6" x2="503.1" y2="362.2" stroke="#2b552b" stroke-width="1.2" stroke-dasharray="2.4,1.2"/><polyline points="499.5,358.2 503.1,362.2 506.7,358.2" fill="none" stroke="#2b552b" stroke-width="1.1"/><line x1="510.0" y1="333.6" x2="510.0" y2="362.2" stroke="#2b552b" stroke-width="1.2" stroke-dasharray="2.4,1.2"/><polyline points="506.4,337.6 510.0,333.6 513.6,337.6" fill="none" stroke="#2b552b" stroke-width="1.1"/><line x1="517.4" y1="333.6" x2="517.4" y2="362.2" stroke="#2b552b" stroke-width="1.2" stroke-dasharray="2.4,1.2"/><polyline points="513.8,358.2 517.4,362.2 521.0,358.2" fill="none" stroke="#2b552b" stroke-width="1.1"/><line x1="524.2" y1="333.6" x2="524.2" y2="362.2" stroke="#2b552b" stroke-width="1.2" stroke-dasharray="2.4,1.2"/><polyline points="520.6,337.6 524.2,333.6 527.8,337.6" fill="none" stroke="#2b552b" stroke-width="1.1"/><line x1="531.6" y1="333.6" x2="531.6" y2="362.2" stroke="#2b552b" stroke-width="1.2" stroke-dasharray="2.4,1.2"/><polyline points="528.0,358.2 531.6,362.2 535.2,358.2" fill="none" stroke="#2b552b" stroke-width="1.1"/><line x1="538.4" y1="333.6" x2="538.4" y2="362.2" stroke="#2b552b" stroke-width="1.2" stroke-dasharray="2.4,1.2"/><polyline points="534.8,337.6 538.4,333.6 542.0,337.6" fill="none" stroke="#2b552b" stroke-width="1.1"/><line x1="545.8" y1="333.6" x2="545.8" y2="362.2" stroke="#2b552b" stroke-width="1.2" stroke-dasharray="2.4,1.2"/><polyline points="542.2,358.2 545.8,362.2 549.4,358.2" fill="none" stroke="#2b552b" stroke-width="1.1"/><line x1="552.6" y1="333.6" x2="552.6" y2="362.2" stroke="#2b552b" stroke-width="1.2" stroke-dasharray="2.4,1.2"/><polyline points="549.0,337.6 552.6,333.6 556.2,337.6" fill="none" stroke="#2b552b" stroke-width="1.1"/><line x1="560.0" y1="333.6" x2="560.0" y2="362.2" stroke="#2b552b" stroke-width="1.2" stroke-dasharray="2.4,1.2"/><polyline points="556.4,358.2 560.0,362.2 563.6,358.2" fill="none" stroke="#2b552b" stroke-width="1.1"/><line x1="566.8" y1="333.6" x2="566.8" y2="362.2" stroke="#2b552b" stroke-width="1.2" stroke-dasharray="2.4,1.2"/><polyline points="563.2,337.6 566.8,333.6 570.4,337.6" fill="none" stroke="#2b552b" stroke-width="1.1"/><line x1="574.2" y1="333.6" x2="574.2" y2="362.2" stroke="#2b552b" stroke-width="1.2" stroke-dasharray="2.4,1.2"/><polyline points="570.6,358.2 574.2,362.2 577.8,358.2" fill="none" stroke="#2b552b" stroke-width="1.1"/><line x1="581.1" y1="333.6" x2="581.1" y2="362.2" stroke="#2b552b" stroke-width="1.2" stroke-dasharray="2.4,1.2"/><polyline points="577.5,337.6 581.1,333.6 584.7,337.6" fill="none" stroke="#2b552b" stroke-width="1.1"/><line x1="588.5" y1="333.6" x2="588.5" y2="362.2" stroke="#2b552b" stroke-width="1.2" stroke-dasharray="2.4,1.2"/><polyline points="584.9,358.2 588.5,362.2 592.1,358.2" fill="none" stroke="#2b552b" stroke-width="1.1"/><line x1="595.3" y1="333.6" x2="595.3" y2="362.2" stroke="#2b552b" stroke-width="1.2" stroke-dasharray="2.4,1.2"/><polyline points="591.7,337.6 595.3,333.6 598.9,337.6" fill="none" stroke="#2b552b" stroke-width="1.1"/><line x1="602.7" y1="333.6" x2="602.7" y2="362.2" stroke="#2b552b" stroke-width="1.2" stroke-dasharray="2.4,1.2"/><polyline points="599.1,358.2 602.7,362.2 606.3,358.2" fill="none" stroke="#2b552b" stroke-width="1.1"/><line x1="609.5" y1="333.6" x2="609.5" y2="362.2" stroke="#2b552b" stroke-width="1.2" stroke-dasharray="2.4,1.2"/><polyline points="605.9,337.6 609.5,333.6 613.1,337.6" fill="none" stroke="#2b552b" stroke-width="1.1"/><line x1="616.9" y1="333.6" x2="616.9" y2="362.2" stroke="#2b552b" stroke-width="1.2" stroke-dasharray="2.4,1.2"/><polyline points="613.3,358.2 616.9,362.2 620.5,358.2" fill="none" stroke="#2b552b" stroke-width="1.1"/><line x1="623.7" y1="333.6" x2="623.7" y2="362.2" stroke="#2b552b" stroke-width="1.2" stroke-dasharray="2.4,1.2"/><polyline points="620.1,337.6 623.7,333.6 627.3,337.6" fill="none" stroke="#2b552b" stroke-width="1.1"/><line x1="467.3" y1="390.7" x2="467.3" y2="419.3" stroke="#2b552b" stroke-width="1.2" stroke-dasharray="2.4,1.2"/><polyline points="463.7,394.7 467.3,390.7 470.9,394.7" fill="none" stroke="#2b552b" stroke-width="1.1"/><polyline points="463.7,415.3 467.3,419.3 470.9,415.3" fill="none" stroke="#2b552b" stroke-width="1.1"/><line x1="474.7" y1="390.7" x2="474.7" y2="419.3" stroke="#2b552b" stroke-width="1.2" stroke-dasharray="2.4,1.2"/><polyline points="471.1,415.3 474.7,419.3 478.3,415.3" fill="none" stroke="#2b552b" stroke-width="1.1"/><line x1="481.5" y1="390.7" x2="481.5" y2="419.3" stroke="#2b552b" stroke-width="1.2" stroke-dasharray="2.4,1.2"/><polyline points="477.9,394.7 481.5,390.7 485.1,394.7" fill="none" stroke="#2b552b" stroke-width="1.1"/><line x1="488.9" y1="390.7" x2="488.9" y2="419.3" stroke="#2b552b" stroke-width="1.2" stroke-dasharray="2.4,1.2"/><polyline points="485.3,415.3 488.9,419.3 492.5,415.3" fill="none" stroke="#2b552b" stroke-width="1.1"/><line x1="495.7" y1="390.7" x2="495.7" y2="419.3" stroke="#2b552b" stroke-width="1.2" stroke-dasharray="2.4,1.2"/><polyline points="492.1,394.7 495.7,390.7 499.3,394.7" fill="none" stroke="#2b552b" stroke-width="1.1"/><line x1="503.1" y1="390.7" x2="503.1" y2="419.3" stroke="#2b552b" stroke-width="1.2" stroke-dasharray="2.4,1.2"/><polyline points="499.5,415.3 503.1,419.3 506.7,415.3" fill="none" stroke="#2b552b" stroke-width="1.1"/><line x1="510.0" y1="390.7" x2="510.0" y2="419.3" stroke="#2b552b" stroke-width="1.2" stroke-dasharray="2.4,1.2"/><polyline points="506.4,394.7 510.0,390.7 513.6,394.7" fill="none" stroke="#2b552b" stroke-width="1.1"/><line x1="517.4" y1="390.7" x2="517.4" y2="419.3" stroke="#2b552b" stroke-width="1.2" stroke-dasharray="2.4,1.2"/><polyline points="513.8,415.3 517.4,419.3 521.0,415.3" fill="none" stroke="#2b552b" stroke-width="1.1"/><line x1="524.2" y1="390.7" x2="524.2" y2="419.3" stroke="#2b552b" stroke-width="1.2" stroke-dasharray="2.4,1.2"/><polyline points="520.6,394.7 524.2,390.7 527.8,394.7" fill="none" stroke="#2b552b" stroke-width="1.1"/><line x1="531.6" y1="390.7" x2="531.6" y2="419.3" stroke="#2b552b" stroke-width="1.2" stroke-dasharray="2.4,1.2"/><polyline points="528.0,415.3 531.6,419.3 535.2,415.3" fill="none" stroke="#2b552b" stroke-width="1.1"/><line x1="538.4" y1="390.7" x2="538.4" y2="419.3" stroke="#2b552b" stroke-width="1.2" stroke-dasharray="2.4,1.2"/><polyline points="534.8,394.7 538.4,390.7 542.0,394.7" fill="none" stroke="#2b552b" stroke-width="1.1"/><line x1="545.8" y1="390.7" x2="545.8" y2="419.3" stroke="#2b552b" stroke-width="1.2" stroke-dasharray="2.4,1.2"/><polyline points="542.2,415.3 545.8,419.3 549.4,415.3" fill="none" stroke="#2b552b" stroke-width="1.1"/><line x1="552.6" y1="390.7" x2="552.6" y2="419.3" stroke="#2b552b" stroke-width="1.2" stroke-dasharray="2.4,1.2"/><polyline points="549.0,394.7 552.6,390.7 556.2,394.7" fill="none" stroke="#2b552b" stroke-width="1.1"/><line x1="560.0" y1="390.7" x2="560.0" y2="419.3" stroke="#2b552b" stroke-width="1.2" stroke-dasharray="2.4,1.2"/><polyline points="556.4,415.3 560.0,419.3 563.6,415.3" fill="none" stroke="#2b552b" stroke-width="1.1"/><line x1="566.8" y1="390.7" x2="566.8" y2="419.3" stroke="#2b552b" stroke-width="1.2" stroke-dasharray="2.4,1.2"/><polyline points="563.2,394.7 566.8,390.7 570.4,394.7" fill="none" stroke="#2b552b" stroke-width="1.1"/><line x1="574.2" y1="390.7" x2="574.2" y2="419.3" stroke="#2b552b" stroke-width="1.2" stroke-dasharray="2.4,1.2"/><polyline points="570.6,415.3 574.2,419.3 577.8,415.3" fill="none" stroke="#2b552b" stroke-width="1.1"/><line x1="581.1" y1="390.7" x2="581.1" y2="419.3" stroke="#2b552b" stroke-width="1.2" stroke-dasharray="2.4,1.2"/><polyline points="577.5,394.7 581.1,390.7 584.7,394.7" fill="none" stroke="#2b552b" stroke-width="1.1"/><line x1="588.5" y1="390.7" x2="588.5" y2="419.3" stroke="#2b552b" stroke-width="1.2" stroke-dasharray="2.4,1.2"/><polyline points="584.9,415.3 588.5,419.3 592.1,415.3" fill="none" stroke="#2b552b" stroke-width="1.1"/><line x1="595.3" y1="390.7" x2="595.3" y2="419.3" stroke="#2b552b" stroke-width="1.2" stroke-dasharray="2.4,1.2"/><polyline points="591.7,394.7 595.3,390.7 598.9,394.7" fill="none" stroke="#2b552b" stroke-width="1.1"/><line x1="602.7" y1="390.7" x2="602.7" y2="419.3" stroke="#2b552b" stroke-width="1.2" stroke-dasharray="2.4,1.2"/><polyline points="599.1,415.3 602.7,419.3 606.3,415.3" fill="none" stroke="#2b552b" stroke-width="1.1"/><line x1="609.5" y1="390.7" x2="609.5" y2="419.3" stroke="#2b552b" stroke-width="1.2" stroke-dasharray="2.4,1.2"/><polyline points="605.9,394.7 609.5,390.7 613.1,394.7" fill="none" stroke="#2b552b" stroke-width="1.1"/><line x1="616.9" y1="390.7" x2="616.9" y2="419.3" stroke="#2b552b" stroke-width="1.2" stroke-dasharray="2.4,1.2"/><polyline points="613.3,415.3 616.9,419.3 620.5,415.3" fill="none" stroke="#2b552b" stroke-width="1.1"/><line x1="623.7" y1="390.7" x2="623.7" y2="419.3" stroke="#2b552b" stroke-width="1.2" stroke-dasharray="2.4,1.2"/><polyline points="620.1,394.7 623.7,390.7 627.3,394.7" fill="none" stroke="#2b552b" stroke-width="1.1"/><line x1="467.3" y1="447.8" x2="467.3" y2="476.4" stroke="#2b552b" stroke-width="1.2" stroke-dasharray="2.4,1.2"/><polyline points="463.7,451.8 467.3,447.8 470.9,451.8" fill="none" stroke="#2b552b" stroke-width="1.1"/><polyline points="463.7,472.4 467.3,476.4 470.9,472.4" fill="none" stroke="#2b552b" stroke-width="1.1"/><line x1="474.7" y1="447.8" x2="474.7" y2="476.4" stroke="#2b552b" stroke-width="1.2" stroke-dasharray="2.4,1.2"/><polyline points="471.1,472.4 474.7,476.4 478.3,472.4" fill="none" stroke="#2b552b" stroke-width="1.1"/><line x1="481.5" y1="447.8" x2="481.5" y2="476.4" stroke="#2b552b" stroke-width="1.2" stroke-dasharray="2.4,1.2"/><polyline points="477.9,451.8 481.5,447.8 485.1,451.8" fill="none" stroke="#2b552b" stroke-width="1.1"/><line x1="488.9" y1="447.8" x2="488.9" y2="476.4" stroke="#2b552b" stroke-width="1.2" stroke-dasharray="2.4,1.2"/><polyline points="485.3,472.4 488.9,476.4 492.5,472.4" fill="none" stroke="#2b552b" stroke-width="1.1"/><line x1="495.7" y1="447.8" x2="495.7" y2="476.4" stroke="#2b552b" stroke-width="1.2" stroke-dasharray="2.4,1.2"/><polyline points="492.1,451.8 495.7,447.8 499.3,451.8" fill="none" stroke="#2b552b" stroke-width="1.1"/><line x1="503.1" y1="447.8" x2="503.1" y2="476.4" stroke="#2b552b" stroke-width="1.2" stroke-dasharray="2.4,1.2"/><polyline points="499.5,472.4 503.1,476.4 506.7,472.4" fill="none" stroke="#2b552b" stroke-width="1.1"/><line x1="510.0" y1="447.8" x2="510.0" y2="476.4" stroke="#2b552b" stroke-width="1.2" stroke-dasharray="2.4,1.2"/><polyline points="506.4,451.8 510.0,447.8 513.6,451.8" fill="none" stroke="#2b552b" stroke-width="1.1"/><line x1="517.4" y1="447.8" x2="517.4" y2="476.4" stroke="#2b552b" stroke-width="1.2" stroke-dasharray="2.4,1.2"/><polyline points="513.8,472.4 517.4,476.4 521.0,472.4" fill="none" stroke="#2b552b" stroke-width="1.1"/><line x1="524.2" y1="447.8" x2="524.2" y2="476.4" stroke="#2b552b" stroke-width="1.2" stroke-dasharray="2.4,1.2"/><polyline points="520.6,451.8 524.2,447.8 527.8,451.8" fill="none" stroke="#2b552b" stroke-width="1.1"/><line x1="531.6" y1="447.8" x2="531.6" y2="476.4" stroke="#2b552b" stroke-width="1.2" stroke-dasharray="2.4,1.2"/><polyline points="528.0,472.4 531.6,476.4 535.2,472.4" fill="none" stroke="#2b552b" stroke-width="1.1"/><line x1="538.4" y1="447.8" x2="538.4" y2="476.4" stroke="#2b552b" stroke-width="1.2" stroke-dasharray="2.4,1.2"/><polyline points="534.8,451.8 538.4,447.8 542.0,451.8" fill="none" stroke="#2b552b" stroke-width="1.1"/><line x1="545.8" y1="447.8" x2="545.8" y2="476.4" stroke="#2b552b" stroke-width="1.2" stroke-dasharray="2.4,1.2"/><polyline points="542.2,472.4 545.8,476.4 549.4,472.4" fill="none" stroke="#2b552b" stroke-width="1.1"/><line x1="552.6" y1="447.8" x2="552.6" y2="476.4" stroke="#2b552b" stroke-width="1.2" stroke-dasharray="2.4,1.2"/><polyline points="549.0,451.8 552.6,447.8 556.2,451.8" fill="none" stroke="#2b552b" stroke-width="1.1"/><line x1="560.0" y1="447.8" x2="560.0" y2="476.4" stroke="#2b552b" stroke-width="1.2" stroke-dasharray="2.4,1.2"/><polyline points="556.4,472.4 560.0,476.4 563.6,472.4" fill="none" stroke="#2b552b" stroke-width="1.1"/><line x1="566.8" y1="447.8" x2="566.8" y2="476.4" stroke="#2b552b" stroke-width="1.2" stroke-dasharray="2.4,1.2"/><polyline points="563.2,451.8 566.8,447.8 570.4,451.8" fill="none" stroke="#2b552b" stroke-width="1.1"/><line x1="574.2" y1="447.8" x2="574.2" y2="476.4" stroke="#2b552b" stroke-width="1.2" stroke-dasharray="2.4,1.2"/><polyline points="570.6,472.4 574.2,476.4 577.8,472.4" fill="none" stroke="#2b552b" stroke-width="1.1"/><line x1="581.1" y1="447.8" x2="581.1" y2="476.4" stroke="#2b552b" stroke-width="1.2" stroke-dasharray="2.4,1.2"/><polyline points="577.5,451.8 581.1,447.8 584.7,451.8" fill="none" stroke="#2b552b" stroke-width="1.1"/><line x1="588.5" y1="447.8" x2="588.5" y2="476.4" stroke="#2b552b" stroke-width="1.2" stroke-dasharray="2.4,1.2"/><polyline points="584.9,472.4 588.5,476.4 592.1,472.4" fill="none" stroke="#2b552b" stroke-width="1.1"/><line x1="595.3" y1="447.8" x2="595.3" y2="476.4" stroke="#2b552b" stroke-width="1.2" stroke-dasharray="2.4,1.2"/><polyline points="591.7,451.8 595.3,447.8 598.9,451.8" fill="none" stroke="#2b552b" stroke-width="1.1"/><line x1="602.7" y1="447.8" x2="602.7" y2="476.4" stroke="#2b552b" stroke-width="1.2" stroke-dasharray="2.4,1.2"/><polyline points="599.1,472.4 602.7,476.4 606.3,472.4" fill="none" stroke="#2b552b" stroke-width="1.1"/><line x1="609.5" y1="447.8" x2="609.5" y2="476.4" stroke="#2b552b" stroke-width="1.2" stroke-dasharray="2.4,1.2"/><polyline points="605.9,451.8 609.5,447.8 613.1,451.8" fill="none" stroke="#2b552b" stroke-width="1.1"/><line x1="616.9" y1="447.8" x2="616.9" y2="476.4" stroke="#2b552b" stroke-width="1.2" stroke-dasharray="2.4,1.2"/><polyline points="613.3,472.4 616.9,476.4 620.5,472.4" fill="none" stroke="#2b552b" stroke-width="1.1"/><line x1="623.7" y1="447.8" x2="623.7" y2="476.4" stroke="#2b552b" stroke-width="1.2" stroke-dasharray="2.4,1.2"/><polyline points="620.1,451.8 623.7,447.8 627.3,451.8" fill="none" stroke="#2b552b" stroke-width="1.1"/><line x1="467.3" y1="276.5" x2="631.1" y2="276.5" stroke="#2b552b" stroke-width="1.1" stroke-dasharray="2,1.2"/><line x1="467.3" y1="305.1" x2="631.1" y2="305.1" stroke="#2b552b" stroke-width="1.1" stroke-dasharray="2,1.2"/><line x1="467.3" y1="333.6" x2="631.1" y2="333.6" stroke="#2b552b" stroke-width="1.1" stroke-dasharray="2,1.2"/><line x1="467.3" y1="362.2" x2="631.1" y2="362.2" stroke="#2b552b" stroke-width="1.1" stroke-dasharray="2,1.2"/><line x1="467.3" y1="390.7" x2="631.1" y2="390.7" stroke="#2b552b" stroke-width="1.1" stroke-dasharray="2,1.2"/><line x1="467.3" y1="419.3" x2="631.1" y2="419.3" stroke="#2b552b" stroke-width="1.1" stroke-dasharray="2,1.2"/><line x1="467.3" y1="447.8" x2="631.1" y2="447.8" stroke="#2b552b" stroke-width="1.1" stroke-dasharray="2,1.2"/><line x1="467.3" y1="476.4" x2="631.1" y2="476.4" stroke="#2b552b" stroke-width="1.1" stroke-dasharray="2,1.2"/><line x1="467.3" y1="504.9" x2="631.1" y2="504.9" stroke="#2b552b" stroke-width="1.1" stroke-dasharray="2,1.2"/><rect x="467.3" y="248.0" width="7.399999999999977" height="28.5" fill="none" stroke="#3cc43c" stroke-width="1.4"/><rect x="481.5" y="248.0" width="7.399999999999977" height="28.5" fill="none" stroke="#3cc43c" stroke-width="1.4"/><rect x="495.7" y="248.0" width="7.400000000000034" height="28.5" fill="none" stroke="#3cc43c" stroke-width="1.4"/><rect x="510.0" y="248.0" width="7.399999999999977" height="28.5" fill="none" stroke="#3cc43c" stroke-width="1.4"/><rect x="524.2" y="248.0" width="7.399999999999977" height="28.5" fill="none" stroke="#3cc43c" stroke-width="1.4"/><rect x="538.4" y="248.0" width="7.399999999999977" height="28.5" fill="none" stroke="#3cc43c" stroke-width="1.4"/><rect x="552.6" y="248.0" width="7.399999999999977" height="28.5" fill="none" stroke="#3cc43c" stroke-width="1.4"/><rect x="566.8" y="248.0" width="7.400000000000091" height="28.5" fill="none" stroke="#3cc43c" stroke-width="1.4"/><rect x="581.1" y="248.0" width="7.399999999999977" height="28.5" fill="none" stroke="#3cc43c" stroke-width="1.4"/><rect x="595.3" y="248.0" width="7.400000000000091" height="28.5" fill="none" stroke="#3cc43c" stroke-width="1.4"/><rect x="609.5" y="248.0" width="7.399999999999977" height="28.5" fill="none" stroke="#3cc43c" stroke-width="1.4"/><rect x="623.7" y="248.0" width="7.399999999999977" height="28.5" fill="none" stroke="#3cc43c" stroke-width="1.4"/><rect x="467.3" y="305.1" width="7.399999999999977" height="28.5" fill="none" stroke="#3cc43c" stroke-width="1.4"/><rect x="481.5" y="305.1" width="7.399999999999977" height="28.5" fill="none" stroke="#3cc43c" stroke-width="1.4"/><rect x="495.7" y="305.1" width="7.400000000000034" height="28.5" fill="none" stroke="#3cc43c" stroke-width="1.4"/><rect x="510.0" y="305.1" width="7.399999999999977" height="28.5" fill="none" stroke="#3cc43c" stroke-width="1.4"/><rect x="524.2" y="305.1" width="7.399999999999977" height="28.5" fill="none" stroke="#3cc43c" stroke-width="1.4"/><rect x="538.4" y="305.1" width="7.399999999999977" height="28.5" fill="none" stroke="#3cc43c" stroke-width="1.4"/><rect x="552.6" y="305.1" width="7.399999999999977" height="28.5" fill="none" stroke="#3cc43c" stroke-width="1.4"/><rect x="566.8" y="305.1" width="7.400000000000091" height="28.5" fill="none" stroke="#3cc43c" stroke-width="1.4"/><rect x="581.1" y="305.1" width="7.399999999999977" height="28.5" fill="none" stroke="#3cc43c" stroke-width="1.4"/><rect x="595.3" y="305.1" width="7.400000000000091" height="28.5" fill="none" stroke="#3cc43c" stroke-width="1.4"/><rect x="609.5" y="305.1" width="7.399999999999977" height="28.5" fill="none" stroke="#3cc43c" stroke-width="1.4"/><rect x="623.7" y="305.1" width="7.399999999999977" height="28.5" fill="none" stroke="#3cc43c" stroke-width="1.4"/><rect x="467.3" y="362.2" width="7.399999999999977" height="28.5" fill="none" stroke="#3cc43c" stroke-width="1.4"/><rect x="481.5" y="362.2" width="7.399999999999977" height="28.5" fill="none" stroke="#3cc43c" stroke-width="1.4"/><rect x="495.7" y="362.2" width="7.400000000000034" height="28.5" fill="none" stroke="#3cc43c" stroke-width="1.4"/><rect x="510.0" y="362.2" width="7.399999999999977" height="28.5" fill="none" stroke="#3cc43c" stroke-width="1.4"/><rect x="524.2" y="362.2" width="7.399999999999977" height="28.5" fill="none" stroke="#3cc43c" stroke-width="1.4"/><rect x="538.4" y="362.2" width="7.399999999999977" height="28.5" fill="none" stroke="#3cc43c" stroke-width="1.4"/><rect x="552.6" y="362.2" width="7.399999999999977" height="28.5" fill="none" stroke="#3cc43c" stroke-width="1.4"/><rect x="566.8" y="362.2" width="7.400000000000091" height="28.5" fill="none" stroke="#3cc43c" stroke-width="1.4"/><rect x="581.1" y="362.2" width="7.399999999999977" height="28.5" fill="none" stroke="#3cc43c" stroke-width="1.4"/><rect x="595.3" y="362.2" width="7.400000000000091" height="28.5" fill="none" stroke="#3cc43c" stroke-width="1.4"/><rect x="609.5" y="362.2" width="7.399999999999977" height="28.5" fill="none" stroke="#3cc43c" stroke-width="1.4"/><rect x="623.7" y="362.2" width="7.399999999999977" height="28.5" fill="none" stroke="#3cc43c" stroke-width="1.4"/><rect x="467.3" y="419.3" width="7.399999999999977" height="28.5" fill="none" stroke="#3cc43c" stroke-width="1.4"/><rect x="481.5" y="419.3" width="7.399999999999977" height="28.5" fill="none" stroke="#3cc43c" stroke-width="1.4"/><rect x="495.7" y="419.3" width="7.400000000000034" height="28.5" fill="none" stroke="#3cc43c" stroke-width="1.4"/><rect x="510.0" y="419.3" width="7.399999999999977" height="28.5" fill="none" stroke="#3cc43c" stroke-width="1.4"/><rect x="524.2" y="419.3" width="7.399999999999977" height="28.5" fill="none" stroke="#3cc43c" stroke-width="1.4"/><rect x="538.4" y="419.3" width="7.399999999999977" height="28.5" fill="none" stroke="#3cc43c" stroke-width="1.4"/><rect x="552.6" y="419.3" width="7.399999999999977" height="28.5" fill="none" stroke="#3cc43c" stroke-width="1.4"/><rect x="566.8" y="419.3" width="7.400000000000091" height="28.5" fill="none" stroke="#3cc43c" stroke-width="1.4"/><rect x="581.1" y="419.3" width="7.399999999999977" height="28.5" fill="none" stroke="#3cc43c" stroke-width="1.4"/><rect x="595.3" y="419.3" width="7.400000000000091" height="28.5" fill="none" stroke="#3cc43c" stroke-width="1.4"/><rect x="609.5" y="419.3" width="7.399999999999977" height="28.5" fill="none" stroke="#3cc43c" stroke-width="1.4"/><rect x="623.7" y="419.3" width="7.399999999999977" height="28.5" fill="none" stroke="#3cc43c" stroke-width="1.4"/><rect x="467.3" y="476.4" width="7.399999999999977" height="28.5" fill="none" stroke="#3cc43c" stroke-width="1.4"/><rect x="481.5" y="476.4" width="7.399999999999977" height="28.5" fill="none" stroke="#3cc43c" stroke-width="1.4"/><rect x="495.7" y="476.4" width="7.400000000000034" height="28.5" fill="none" stroke="#3cc43c" stroke-width="1.4"/><rect x="510.0" y="476.4" width="7.399999999999977" height="28.5" fill="none" stroke="#3cc43c" stroke-width="1.4"/><rect x="524.2" y="476.4" width="7.399999999999977" height="28.5" fill="none" stroke="#3cc43c" stroke-width="1.4"/><rect x="538.4" y="476.4" width="7.399999999999977" height="28.5" fill="none" stroke="#3cc43c" stroke-width="1.4"/><rect x="552.6" y="476.4" width="7.399999999999977" height="28.5" fill="none" stroke="#3cc43c" stroke-width="1.4"/><rect x="566.8" y="476.4" width="7.400000000000091" height="28.5" fill="none" stroke="#3cc43c" stroke-width="1.4"/><rect x="581.1" y="476.4" width="7.399999999999977" height="28.5" fill="none" stroke="#3cc43c" stroke-width="1.4"/><rect x="595.3" y="476.4" width="7.400000000000091" height="28.5" fill="none" stroke="#3cc43c" stroke-width="1.4"/><rect x="609.5" y="476.4" width="7.399999999999977" height="28.5" fill="none" stroke="#3cc43c" stroke-width="1.4"/><rect x="623.7" y="476.4" width="7.399999999999977" height="28.5" fill="none" stroke="#3cc43c" stroke-width="1.4"/><circle cx="50" cy="623.5" r="1.85" fill="#3b3b8c" stroke="#2d2de0" stroke-width="1.15"/><circle cx="79.5" cy="623.5" r="1.85" fill="#3b3b8c" stroke="#2d2de0" stroke-width="1.15"/><circle cx="108.5" cy="623.5" r="1.85" fill="#3b3b8c" stroke="#2d2de0" stroke-width="1.15"/><circle cx="305" cy="623.5" r="1.85" fill="#3b3b8c" stroke="#2d2de0" stroke-width="1.15"/><circle cx="334.5" cy="623.5" r="1.85" fill="#3b3b8c" stroke="#2d2de0" stroke-width="1.15"/><circle cx="364" cy="623.5" r="1.85" fill="#3b3b8c" stroke="#2d2de0" stroke-width="1.15"/><circle cx="405" cy="623.5" r="1.85" fill="#3b3b8c" stroke="#2d2de0" stroke-width="1.15"/><circle cx="435" cy="623.5" r="1.85" fill="#3b3b8c" stroke="#2d2de0" stroke-width="1.15"/><circle cx="464" cy="623.5" r="1.85" fill="#3b3b8c" stroke="#2d2de0" stroke-width="1.15"/><circle cx="638" cy="623.5" r="1.85" fill="#3b3b8c" stroke="#2d2de0" stroke-width="1.15"/><circle cx="668" cy="623.5" r="1.85" fill="#3b3b8c" stroke="#2d2de0" stroke-width="1.15"/><circle cx="697" cy="623.5" r="1.85" fill="#3b3b8c" stroke="#2d2de0" stroke-width="1.15"/><circle cx="738" cy="623.5" r="1.85" fill="#3b3b8c" stroke="#2d2de0" stroke-width="1.15"/><circle cx="767" cy="623.5" r="1.85" fill="#3b3b8c" stroke="#2d2de0" stroke-width="1.15"/><circle cx="796" cy="623.5" r="1.85" fill="#3b3b8c" stroke="#2d2de0" stroke-width="1.15"/><circle cx="993" cy="623.5" r="1.85" fill="#3b3b8c" stroke="#2d2de0" stroke-width="1.15"/><circle cx="1022.5" cy="623.5" r="1.85" fill="#3b3b8c" stroke="#2d2de0" stroke-width="1.15"/><circle cx="1051.5" cy="623.5" r="1.85" fill="#3b3b8c" stroke="#2d2de0" stroke-width="1.15"/><polygon points="28.5,629 33,633.5 28.5,638 24,633.5" fill="none" stroke="#f2e600" stroke-width="1.5"/></svg>
<!-- status bar -->
<div class="st" style="left:8px">722.65285</div>
<div class="st" style="left:75px">708.03536</div>
<div class="st" style="left:496px">FE(N2-5), 1</div>
<div class="st" style="left:639px">1486.801 x 708.891</div>
<div class="st" style="left:927px">Maintenance: 15.11.2021</div>
<div class="abs" style="left:1073px;top:663px;width:1px;height:10px;background:#94c2ee"></div>
<svg class="abs" style="left:876px;top:661px" width="16" height="16" viewBox="0 0 16 16">
<g stroke="#b8c4cc" stroke-width="0.8"><path d="M7.5,0.5 v2 M3,2 l1.3,1.3 M12,2 l-1.3,1.3 M1.5,5.5 h1.8 M11.8,5.5 h1.8 M3,9 l1.3,-1.2 M12,9 l-1.3,-1.2"/></g>
<ellipse cx="7.6" cy="5.2" rx="2.7" ry="1.9" fill="none" stroke="#3a82e4" stroke-width="1.9"/>
<path d="M6.4,6.8 H9 V13.8 H4.2 V11.2 H6.4 Z" fill="#3a7fe2"/>
</svg>
</body></html>
